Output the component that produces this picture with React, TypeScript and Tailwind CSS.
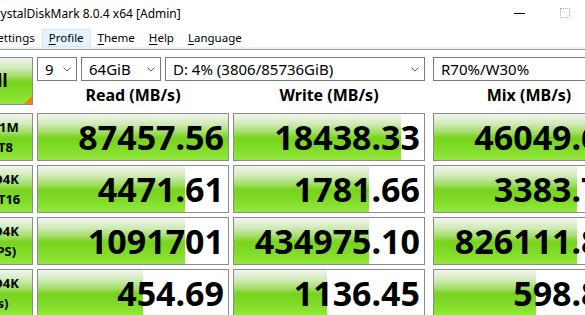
import React from 'react';

const rows = [
  {
    top: 'SEQ1M',
    bottom: 'Q8T8',
    cells: [
      { value: '87457.56', fill: 100 },
      { value: '18438.33', fill: 87.9 },
      { value: '46049.66', fill: 100 },
    ],
  },
  {
    top: 'RND4K',
    bottom: 'Q32T16',
    cells: [
      { value: '4471.61', fill: 77.4 },
      { value: '1781.66', fill: 71 },
      { value: '3383.71', fill: 75.2 },
    ],
  },
  {
    top: 'RND4K',
    bottom: '(IOPS)',
    cells: [
      { value: '1091701', fill: 77.4 },
      { value: '434975.10', fill: 71 },
      { value: '826111.84', fill: 75.3 },
    ],
  },
  {
    top: 'RND4K',
    bottom: '(μs)',
    cells: [
      { value: '454.69', fill: 55.3 },
      { value: '1136.45', fill: 48.8 },
      { value: '598.83', fill: 53.7 },
    ],
  },
];

const menu = ['Settings', 'Profile', 'Theme', 'Help', 'Language'];

function Chevron() {
  return (
    <svg width="8" height="5" viewBox="0 0 8 5" className="mr-[5px] shrink-0">
      <path d="M0.5 0.5 L4 4 L7.5 0.5" fill="none" stroke="#606060" strokeWidth="1" />
    </svg>
  );
}

function Combo({ text, width, chevron = true }: { text: string; width: string; chevron?: boolean }) {
  return (
    <div className={`${width} h-[24px] flex items-center justify-between border border-[#7a7a7a] bg-white pl-[7px] text-[15px] leading-none`}>
      <span className="whitespace-nowrap">{text}</span>
      {chevron && <Chevron />}
    </div>
  );
}

function Cell({ value, fill, extra }: { value: string; fill: number; extra?: string }) {
  return (
    <div className={`relative w-[192px] h-[48px] shrink-0 border border-[#8c8c8c] bg-white overflow-hidden ${extra ?? ''}`}>
      <div
        className="absolute inset-y-0 left-0 bg-[linear-gradient(to_bottom,#f2f5ef_0%,#d2ebbd_20%,#a2de66_40%,#78d21e_52%,#80dc28_75%,#94e83c_100%)]"
        style={{ width: `${fill}%` }}
      />
      <div className="relative flex h-full items-center justify-end pr-[4px] text-[34px] font-bold leading-none whitespace-nowrap">
        {value}
      </div>
    </div>
  );
}

export default function App() {
  return (
    <div className="w-[585px] h-[315px] overflow-hidden bg-white text-black font-['Noto_Sans',sans-serif]">
      <div className="-ml-[40px] w-[674px]">
        {/* title bar */}
        <div className="flex h-[28px]">
          <div className="flex-1 pl-[28px] pt-[6px] text-[12px] leading-[16px] whitespace-nowrap">
            CrystalDiskMark 8.0.4 x64 [Admin]
          </div>
          <div className="flex h-[26px]">
            <div className="w-[46px] flex items-center justify-center">
              <div className="w-[11px] h-px bg-black" />
            </div>
            <div className="w-[46px] flex items-center justify-center">
              <div className="w-[10px] h-[10px] border border-dotted border-[#b4b4b4]" />
            </div>
            <div className="w-[46px] flex items-center justify-center">
              <svg width="10" height="10" viewBox="0 0 10 10">
                <path d="M0 0 L10 10 M10 0 L0 10" stroke="#000" strokeWidth="1" />
              </svg>
            </div>
          </div>
        </div>

        {/* menu */}
        <div className="flex h-[19px] pl-[24px] text-[11.5px]">
          {menu.map((m) => (
            <div
              key={m}
              className={`mt-px h-[18px] px-[6px] flex items-center border ${
                m === 'Profile' ? 'bg-[#e5f3ff] border-[#cce8ff]' : 'border-transparent'
              }`}
            >
              <span>
                <u className="underline-offset-2">{m[0]}</u>
                {m.slice(1)}
              </span>
            </div>
          ))}
        </div>
        <div className="h-[2px] bg-[#f0f0f0]" />
        <div className="h-px bg-[#a0a0a0]" />

        {/* main */}
        <div className="flex flex-col gap-[4px] pt-[7px]">
          <div className="flex gap-[4px]">
            <div className="relative w-[73px] h-[48px] shrink-0 border border-[#8c8c8c] bg-[linear-gradient(to_bottom,#f2f5ef_0%,#d2ebbd_20%,#a2de66_40%,#78d21e_52%,#80dc28_75%,#94e83c_100%)] flex items-center justify-center text-[17px] font-bold">
              All
              <svg width="8" height="8" viewBox="0 0 8 8" className="absolute bottom-0 right-0">
                <path d="M8 0 L8 8 L0 8 Z" fill="#ff7f00" />
              </svg>
            </div>
            <div className="flex flex-col">
              <div className="flex h-[24px]">
                <div className="flex gap-[4px]">
                  <Combo text="9" width="w-[40px]" />
                  <Combo text="64GiB" width="w-[80px]" />
                  <Combo text="D: 4% (3806/85736GiB)" width="w-[260px]" />
                </div>
                <div className="ml-[8px]">
                  <Combo text="R70%/W30%" width="w-[192px]" />
                </div>
              </div>
              <div className="flex h-[28px] items-center text-[16px] font-bold leading-none">
                <div className="w-[192px] text-center">Read (MB/s)</div>
                <div className="ml-[4px] w-[192px] text-center">Write (MB/s)</div>
                <div className="ml-[8px] w-[192px] text-center">Mix (MB/s)</div>
              </div>
            </div>
          </div>

          {rows.map((r, i) => (
            <div key={i} className="flex gap-[4px]">
              <div className="w-[73px] h-[48px] shrink-0 border border-[#8c8c8c] bg-[linear-gradient(to_bottom,#f2f5ef_0%,#d2ebbd_20%,#a2de66_40%,#78d21e_52%,#80dc28_75%,#94e83c_100%)] flex flex-col items-center justify-center text-[13px] font-bold leading-[20px]">
                <span>{r.top}</span>
                <span>{r.bottom}</span>
              </div>
              <Cell value={r.cells[0].value} fill={r.cells[0].fill} />
              <Cell value={r.cells[1].value} fill={r.cells[1].fill} />
              <Cell value={r.cells[2].value} fill={r.cells[2].fill} extra="ml-[4px]" />
            </div>
          ))}
        </div>
      </div>
    </div>
  );
}
